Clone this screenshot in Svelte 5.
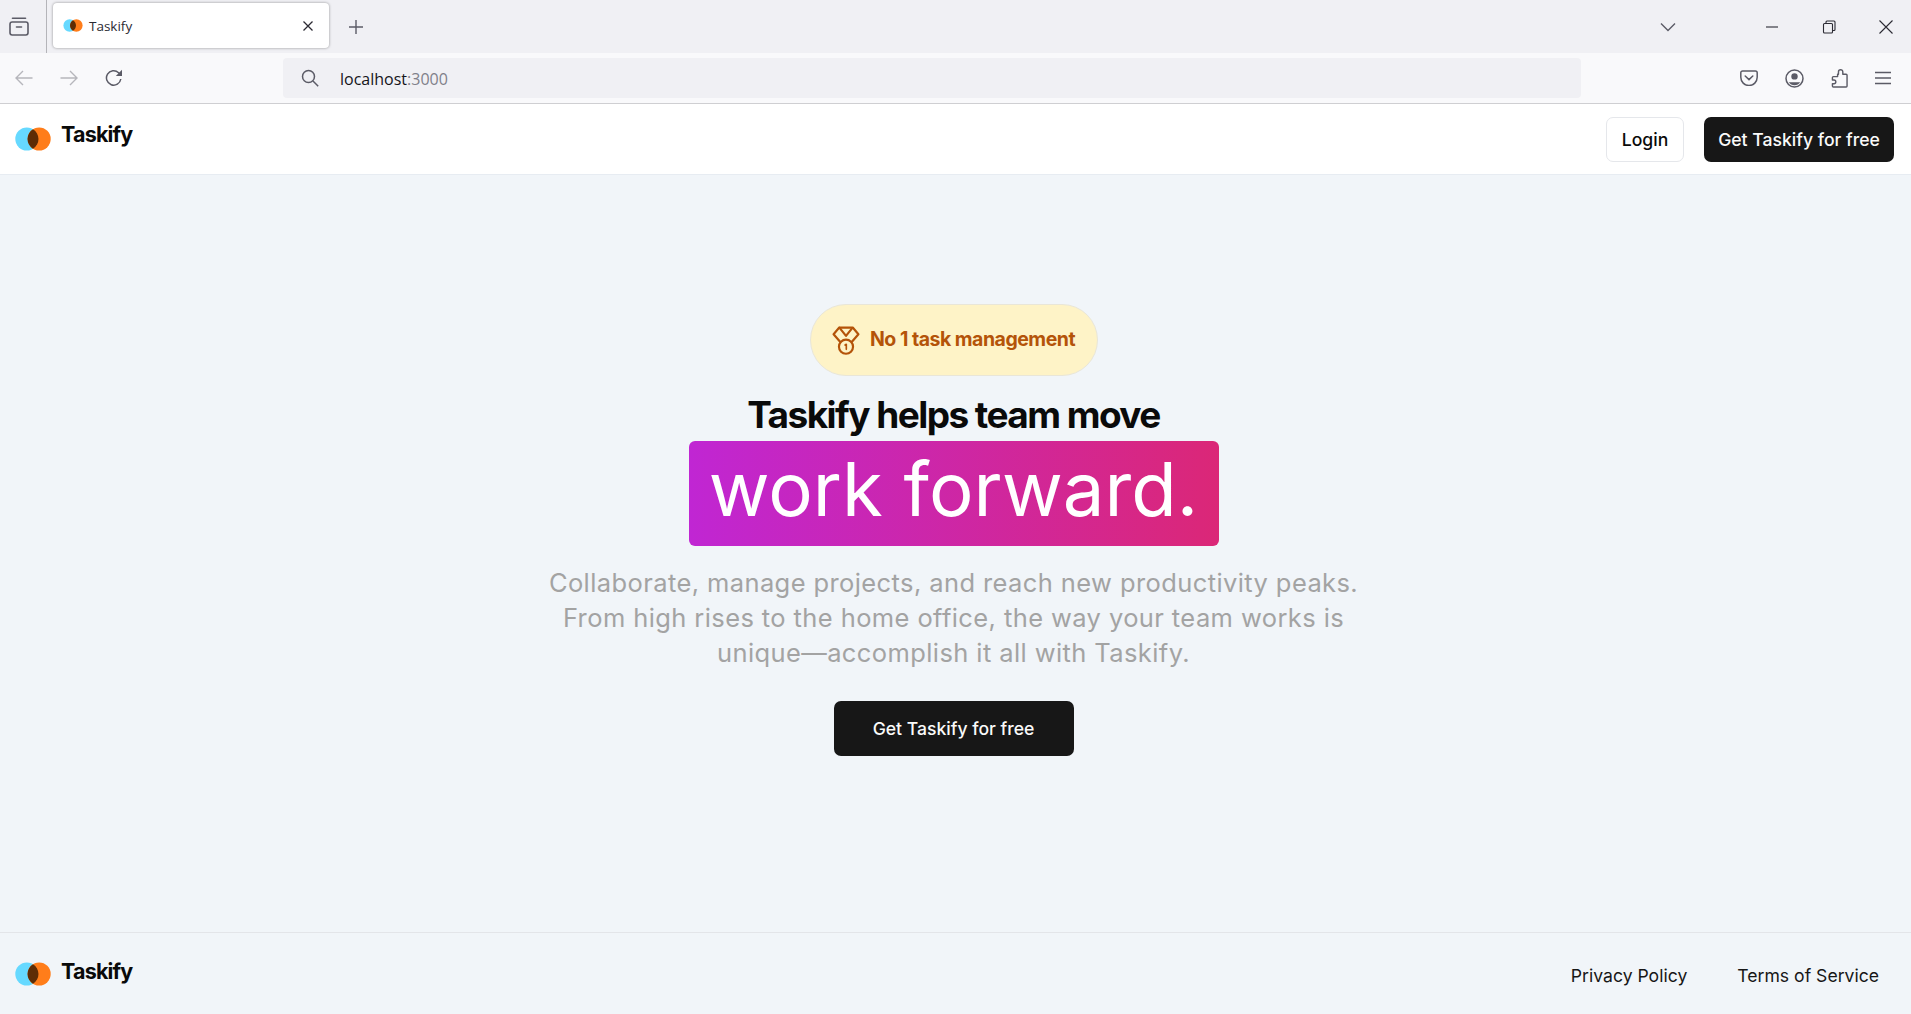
<script>
  // Landing page inside a Firefox-style window frame.
  const tabIconColor = "#5b5b66";
</script>

{#snippet logo(cls)}
  <div class={`brand ${cls}`}>
    <svg class="brand-mark" viewBox="0 0 36 24" width="36" height="24">
      <circle cx="11.8" cy="12" r="11.5" fill="#66d9ff" />
      <circle cx="24.2" cy="12" r="11.5" fill="#ff7d1a" />
      <path d="M18 2.2a11.5 11.5 0 0 1 0 19.6a11.5 11.5 0 0 1 0-19.6z" fill="#5e2c05" />
    </svg>
    <span class="brand-name">Taskify</span>
  </div>
{/snippet}

<div class="page">
  <div class="tabbar">
    <div class="view-btn">
      <svg viewBox="0 0 20 20" width="20" height="20" fill="none" stroke={tabIconColor} stroke-width="1.6">
        <path d="M3.5 2.2h13" stroke-linecap="round" />
        <rect x="1" y="6" width="18" height="13" rx="2.2" />
        <path d="M7.5 11h5" stroke-linecap="round" />
      </svg>
    </div>
    <div class="tab">
      <svg viewBox="0 0 36 24" width="20" height="13">
        <circle cx="11.8" cy="12" r="11.5" fill="#66d9ff" />
        <circle cx="24.2" cy="12" r="11.5" fill="#ff7d1a" />
        <path d="M18 2.2a11.5 11.5 0 0 1 0 19.6a11.5 11.5 0 0 1 0-19.6z" fill="#5e2c05" />
      </svg>
      <span class="tab-title">Taskify</span>
      <svg class="tab-close" viewBox="0 0 12 12" width="12" height="12" stroke="#2b2a33" stroke-width="1.3" fill="none">
        <path d="M1.5 1.5l9 9M10.5 1.5l-9 9" />
      </svg>
    </div>
    <svg class="new-tab" viewBox="0 0 16 16" width="16" height="16" stroke={tabIconColor} stroke-width="1.4" fill="none">
      <path d="M8 1v14M1 8h14" />
    </svg>
    <svg class="tab-list" viewBox="0 0 16 10" width="16" height="10" stroke={tabIconColor} stroke-width="1.4" fill="none">
      <path d="M1 1.5l7 7 7-7" />
    </svg>
    <div class="win-btns">
      <svg viewBox="0 0 14 14" width="14" height="14" stroke="#2b2a33" stroke-width="1.1" fill="none"><path d="M1 7h12" /></svg>
      <svg viewBox="0 0 14 14" width="14" height="14" stroke="#2b2a33" stroke-width="1.1" fill="none">
        <rect x="1.5" y="3.5" width="9" height="9.5" rx="1" />
        <path d="M4 3.5V2a1 1 0 0 1 1-1h7a1 1 0 0 1 1 1v7.5a1 1 0 0 1-1 1h-1.5" />
      </svg>
      <svg viewBox="0 0 14 14" width="14" height="14" stroke="#2b2a33" stroke-width="1.1" fill="none"><path d="M.5.5l13 13M13.5.5l-13 13" /></svg>
    </div>
  </div>

  <div class="toolbar">
    <div class="nav-btns">
      <svg viewBox="0 0 18 16" width="18" height="16" stroke="#b6b6bc" stroke-width="1.4" fill="none"><path d="M17.5 8H1M8 1L1 8l7 7" /></svg>
      <svg viewBox="0 0 18 16" width="18" height="16" stroke="#b6b6bc" stroke-width="1.4" fill="none"><path d="M.5 8H17M10 1l7 7-7 7" /></svg>
      <svg viewBox="0 0 18 18" width="18" height="18" stroke={tabIconColor} stroke-width="1.5" fill="none">
        <path d="M15.8 10a7.2 7.2 0 1 1-2.2-6.3L16 6" />
        <path d="M17 .8V7h-6.2z" fill={tabIconColor} stroke="none" />
      </svg>
    </div>
    <div class="urlbar">
      <svg viewBox="0 0 18 18" width="18" height="18" stroke={tabIconColor} stroke-width="1.5" fill="none">
        <circle cx="7.5" cy="7.5" r="6" /><path d="M12 12l5.2 5.2" />
      </svg>
      <span class="url"><span class="host">localhost</span>:3000</span>
    </div>
    <div class="tool-btns">
      <svg viewBox="0 0 18 16" width="18" height="16" stroke={tabIconColor} stroke-width="1.5" fill="none">
        <path d="M2.6 1h12.8A1.8 1.8 0 0 1 17.2 2.8V7.3A8.2 8.2 0 0 1 .8 7.3V2.8A1.8 1.8 0 0 1 2.6 1z" />
        <path d="M5.2 6l3.8 3.6L12.8 6" stroke-linecap="round" />
      </svg>
      <svg viewBox="0 0 19 19" width="19" height="19" fill="none">
        <circle cx="9.5" cy="9.5" r="8.5" stroke={tabIconColor} stroke-width="1.5" />
        <circle cx="9.5" cy="7.4" r="3.2" fill={tabIconColor} />
        <path d="M3.8 13.2h11.4a6.8 6.8 0 0 1-11.4 0z" fill={tabIconColor} />
      </svg>
      <svg viewBox="0 0 18 20" width="17" height="19" stroke={tabIconColor} stroke-width="1.5" fill="none" stroke-linejoin="round">
        <path d="M7 8H2.5a1 1 0 0 0-1 1v2.5h1.6a2 2 0 0 1 0 4H1.5V18a1 1 0 0 0 1 1H16a1 1 0 0 0 1-1V6.5a1 1 0 0 0-1-1h-3.5V3a2.3 2.3 0 0 0-4.6 0v2.5H7z" />
      </svg>
      <svg viewBox="0 0 16 14" width="16" height="14" stroke={tabIconColor} stroke-width="1.4" fill="none"><path d="M0 1.5h16M0 7h16M0 12.5h16" /></svg>
    </div>
  </div>

  <header class="site-nav">
    {@render logo("brand-nav")}
    <div class="nav-actions">
      <button class="btn btn-outline">Login</button>
      <button class="btn btn-dark">Get Taskify for free</button>
    </div>
  </header>

  <main class="hero">
    <div class="badge">
      <svg viewBox="0 0 27 28" width="28" height="29" fill="none" stroke="#b45309" stroke-width="2.1" stroke-linejoin="round" stroke-linecap="round">
        <path d="M7 1.5h13l5.5 6.5-6.5 7.5M7 1.5L1.5 8 8 15.5" />
        <path d="M7.5 2l6 7.5 6-7.5" />
        <circle cx="13.5" cy="20" r="6.8" />
        <path d="M12.6 18.4l1.2-.7v4.8" stroke-width="1.6" />
      </svg>
      <span class="badge-text">No 1 task management</span>
    </div>
    <h1 class="title">Taskify helps team move</h1>
    <div class="highlight">work forward.</div>
    <p class="lead">
      Collaborate, manage projects, and reach new productivity peaks.<br />
      From high rises to the home office, the way your team works is<br />
      unique—accomplish it all with Taskify.
    </p>
    <button class="btn btn-dark btn-cta">Get Taskify for free</button>
  </main>

  <footer class="site-foot">
    {@render logo("brand-foot")}
    <div class="foot-links">
      <span>Privacy Policy</span>
      <span>Terms of Service</span>
    </div>
  </footer>
</div>

<style>
  :global(body) {
    background: #f1f5f9;
    font-family: Inter, "Liberation Sans", sans-serif;
  }
  .page {
    display: flex;
    flex-direction: column;
    height: 1014px;
    overflow: hidden;
  }

  /* window frame */
  .tabbar {
    height: 53px;
    flex: none;
    display: flex;
    align-items: center;
    background: #f0f0f4;
  }
  .view-btn {
    width: 47px;
    height: 53px;
    box-sizing: border-box;
    display: flex;
    align-items: center;
    padding-left: 9px;
    padding-bottom: 1px;
    border-right: 1px solid #b4b4b9;
    margin-right: 6px;
  }
  .tab {
    width: 276px;
    height: 45px;
    margin-top: -2px;
    box-sizing: border-box;
    background: #fff;
    border-radius: 4px;
    box-shadow: 0 0 3px rgba(0, 0, 0, 0.4);
    display: flex;
    align-items: center;
    padding: 0 15px 0 10px;
    gap: 6px;
  }
  .tab-title {
    flex: 1;
    font-family: "Open Sans", sans-serif;
    font-size: 13.5px;
    color: #2b2a33;
  }
  .new-tab { margin-left: 19px; }
  .tab-list { margin-left: 1296px; }
  .win-btns {
    margin-left: 89px;
    display: flex;
    gap: 43px;
    align-items: center;
  }

  .toolbar {
    height: 51px;
    flex: none;
    box-sizing: border-box;
    display: flex;
    align-items: center;
    background: #f9f9fb;
    border-bottom: 1px solid #cfcfd2;
    padding-left: 15px;
  }
  .nav-btns {
    display: flex;
    align-items: center;
    gap: 27px;
    width: 268px;
  }
  .urlbar {
    width: 1298px;
    height: 40px;
    box-sizing: border-box;
    background: #f0f0f4;
    border-radius: 4px;
    display: flex;
    align-items: center;
    padding-left: 18px;
    gap: 21px;
  }
  .url {
    font-family: "Open Sans", sans-serif;
    font-size: 16px;
    color: #80808a;
    padding-top: 2px;
  }
  .host { color: #15141a; }
  .tool-btns {
    display: flex;
    align-items: center;
    gap: 27px;
    margin-left: 159px;
  }

  /* site header */
  .site-nav {
    height: 71px;
    flex: none;
    box-sizing: border-box;
    background: #fff;
    border-bottom: 1px solid #e7ecf2;
    display: flex;
    align-items: center;
    justify-content: space-between;
    padding: 0 17px 0 15px;
  }
  .brand {
    display: flex;
    align-items: flex-start;
    gap: 11px;
  }
  .brand-nav { margin-top: -4px; }
  .brand-foot { margin-top: -3px; }
  .brand-nav .brand-name { margin-top: -2px; }
  .brand-mark { flex: none; margin-top: 3px; }
  .brand-name {
    font-size: 21.5px;
    line-height: 24px;
    font-weight: 700;
    letter-spacing: -0.8px;
    color: #0a0a0a;
    margin-left: -1px;
  }
  .nav-actions {
    display: flex;
    gap: 20px;
  }
  .btn {
    height: 45px;
    box-sizing: border-box;
    font-family: Inter, sans-serif;
    font-size: 17.6px;
    font-weight: 500;
    white-space: nowrap;
    border-radius: 7px;
    border: 1px solid transparent;
    padding: 0;
    cursor: pointer;
  }
  .btn-outline {
    width: 78px;
    background: #fff;
    color: #0a0a0a;
    border-color: #e5e7eb;
  }
  .btn-dark {
    width: 190px;
    background: #171717;
    color: #fafafa;
  }

  /* hero */
  .hero {
    flex: 1;
    display: flex;
    flex-direction: column;
    align-items: center;
    padding: 129px 4px 0 0;
  }
  .badge {
    height: 72px;
    width: 288px;
    box-sizing: border-box;
    display: flex;
    align-items: center;
    justify-content: center;
    gap: 10px;
    background: #fef3c7;
    border: 1px solid #e9e6d8;
    border-radius: 36px;
    color: #b45309;
    font-size: 19.5px;
    font-weight: 700;
    letter-spacing: -0.5px;
  }
  .badge-text { margin-bottom: 2px; }
  .title {
    margin: 17px 0 0;
    font-size: 37px;
    line-height: 44px;
    font-weight: 700;
    letter-spacing: -1.55px;
    color: #0a0a0a;
  }
  .highlight {
    margin-top: 4px;
    width: 530px;
    height: 105px;
    box-sizing: border-box;
    display: flex;
    justify-content: center;
    color: #fff;
    font-size: 74.3px;
    line-height: 96px;
    border-radius: 6px;
    background: linear-gradient(to right, #c026d3, #db2777);
  }
  .lead {
    margin: 19px 0 0;
    text-align: center;
    color: #a3a3a3;
    font-family: Inter, sans-serif;
    font-size: 25.5px;
    letter-spacing: 0.4px;
    line-height: 35.2px;
  }
  .btn-cta {
    margin-top: 30px;
    width: 240px;
    height: 55px;
  }

  /* footer */
  .site-foot {
    height: 82px;
    flex: none;
    box-sizing: border-box;
    border-top: 1px solid #e3e5e9;
    display: flex;
    align-items: center;
    justify-content: space-between;
    padding: 0 32px 0 15px;
  }
  .foot-links {
    display: flex;
    gap: 50px;
    font-size: 17.6px;
    color: #171717;
    padding-top: 3px;
  }
</style>
